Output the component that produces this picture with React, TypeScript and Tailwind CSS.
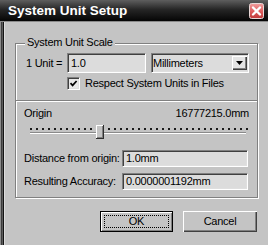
import React from "react";

const sunken =
  "border border-t-[#808080] border-l-[#808080] border-b-white border-r-white shadow-[inset_1px_1px_0_#404040,inset_-1px_-1px_0_#dfdfdf]";
const raised =
  "shadow-[inset_1px_1px_0_#ffffff,inset_-1px_-1px_0_#404040,inset_-2px_-2px_0_#808080]";

function Field({ value, w }: { value: string; w: string }) {
  return (
    <div className={`${w} h-[17px] ${sunken} bg-[#dcdcdc] flex items-center pl-[3px]`}>
      <span>{value}</span>
    </div>
  );
}

export default function App() {
  const dots = Array.from({ length: 37 }, (_, i) => 14 + i * 6);
  return (
    <div className="w-[268px] h-[245px] overflow-hidden bg-[#c4c4c4] text-black font-['Liberation_Sans',Arial,sans-serif] text-[11px] tracking-[-0.25px] leading-none select-none">
      {/* Title bar */}
      <div className="h-[22px] flex items-center pl-[8px] pr-[4px] bg-[linear-gradient(to_bottom,#5e5e5e,#262626_45%,#050505)] border-b border-[#8a8a8a]">
        <span className="text-white font-bold text-[13.5px] tracking-normal">System Unit Setup</span>
        <svg className="ml-auto" width="15" height="16" viewBox="0 0 15 16">
          <defs>
            <linearGradient id="cg" x1="0" y1="0" x2="0" y2="1">
              <stop offset="0" stopColor="#f2a0a0" />
              <stop offset="0.5" stopColor="#e06060" />
              <stop offset="1" stopColor="#c03a3a" />
            </linearGradient>
          </defs>
          <rect x="0.5" y="0.5" width="14" height="15" rx="2" fill="url(#cg)" stroke="#e8d8d8" />
          <path d="M4 4.5 L11 11.5 M11 4.5 L4 11.5" stroke="#ffffff" strokeWidth="2.4" strokeLinecap="round" />
        </svg>
      </div>

      <div className="flex h-[223px]">
        {/* left window frame */}
        <div className="flex h-full">
          <div className="w-px bg-[#8c8c8c]" />
          <div className="w-px bg-[#3c3c3c]" />
          <div className="w-px bg-[#5c5c5c]" />
          <div className="w-px bg-[#141414]" />
          <div className="w-px bg-[#dcdcdc]" />
        </div>

        <div className="flex-1 flex flex-col">
          {/* Group box */}
          <div className="relative ml-[10px] mt-[21px] w-[243px] h-[155px] border border-[#808080] shadow-[inset_1px_1px_0_#fff,1px_1px_0_#fff]">
            <span className="absolute left-[9px] top-[-8px] px-[2px] bg-[#c4c4c4] leading-[13px]">
              System Unit Scale
            </span>

            {/* 1 Unit row */}
            <div className="mt-[9px] h-[20px] flex items-center pl-[10px]">
              <span className="w-[41px]">1 Unit =</span>
              <div className={`w-[79px] h-[20px] ${sunken} bg-[#dcdcdc] flex items-center pl-[3px]`}>
                <span>1.0</span>
              </div>
              <div className={`ml-[5px] w-[98px] h-[20px] ${sunken} bg-[#dcdcdc] flex items-center pl-[1px]`}>
                <span>Millimeters</span>
                <div className={`ml-auto mr-[1px] w-[15px] h-[14px] bg-[#e4e4e4] ${raised} flex items-center justify-center`}>
                  <svg width="7" height="4" viewBox="0 0 7 4">
                    <polygon points="0,0 7,0 3.5,4" fill="#000" />
                  </svg>
                </div>
              </div>
            </div>

            {/* checkbox row */}
            <div className="mt-[4px] h-[13px] flex items-center pl-[51px]">
              <div className={`w-[13px] h-[13px] ${sunken} bg-[#e8e8e8] flex items-center justify-center`}>
                <svg width="9" height="9" viewBox="0 0 9 9">
                  <path d="M1.5 4.2 L3.6 6.4 L7.6 2" stroke="#000" strokeWidth="1.7" fill="none" />
                </svg>
              </div>
              <span className="ml-[5px]">Respect System Units in Files</span>
            </div>

            {/* divider */}
            <div className="mt-[10px] h-[2px] border-t border-t-[#808080] border-b border-b-white" />

            {/* Origin row */}
            <div className="mt-[5px] h-[13px] flex items-center justify-between pl-[8px] pr-[8px]">
              <span>Origin</span>
              <span>16777215.0mm</span>
            </div>

            {/* slider */}
            <svg className="block" width="241" height="20" viewBox="0 0 241 20">
              {dots.map((x) => (
                <rect key={x} x={x} y={8} width={2} height={2} fill="#1a1a1a" />
              ))}
              <rect x="14" y="12" width="216" height="1" fill="#8a8a8a" />
              <rect x="14" y="13" width="216" height="1" fill="#ffffff" />
              <rect x="80" y="5" width="8" height="14" fill="#c4c4c4" />
              <rect x="80" y="5" width="8" height="1" fill="#ffffff" />
              <rect x="80" y="5" width="1" height="14" fill="#ffffff" />
              <rect x="87" y="5" width="1" height="14" fill="#303030" />
              <rect x="80" y="18" width="8" height="1" fill="#303030" />
              <rect x="86" y="6" width="1" height="12" fill="#808080" />
              <rect x="81" y="17" width="6" height="1" fill="#808080" />
            </svg>

            {/* Distance row */}
            <div className="mt-[10px] h-[17px] flex items-center pl-[8px]">
              <span className="w-[98px]">Distance from origin:</span>
              <Field value="1.0mm" w="w-[126px]" />
            </div>

            {/* Accuracy row */}
            <div className="mt-[6px] h-[17px] flex items-center pl-[8px]">
              <span className="w-[98px]">Resulting Accuracy:</span>
              <Field value="0.0000001192mm" w="w-[126px]" />
            </div>
          </div>

          {/* Buttons */}
          <div className="mt-[13px] flex justify-end gap-[10px] pr-[11px]">
            <div className="w-[73px] h-[21px] border border-black bg-[#c4c4c4] shadow-[inset_1px_1px_0_#ffffff,inset_-1px_-1px_0_#808080] p-[3px] flex">
              <div className="flex-1 border border-dotted border-black flex items-center justify-center">
                <span>OK</span>
              </div>
            </div>
            <div className={`w-[74px] h-[21px] bg-[#c4c4c4] ${raised} flex items-center justify-center`}>
              <span>Cancel</span>
            </div>
          </div>
        </div>
      </div>
    </div>
  );
}
